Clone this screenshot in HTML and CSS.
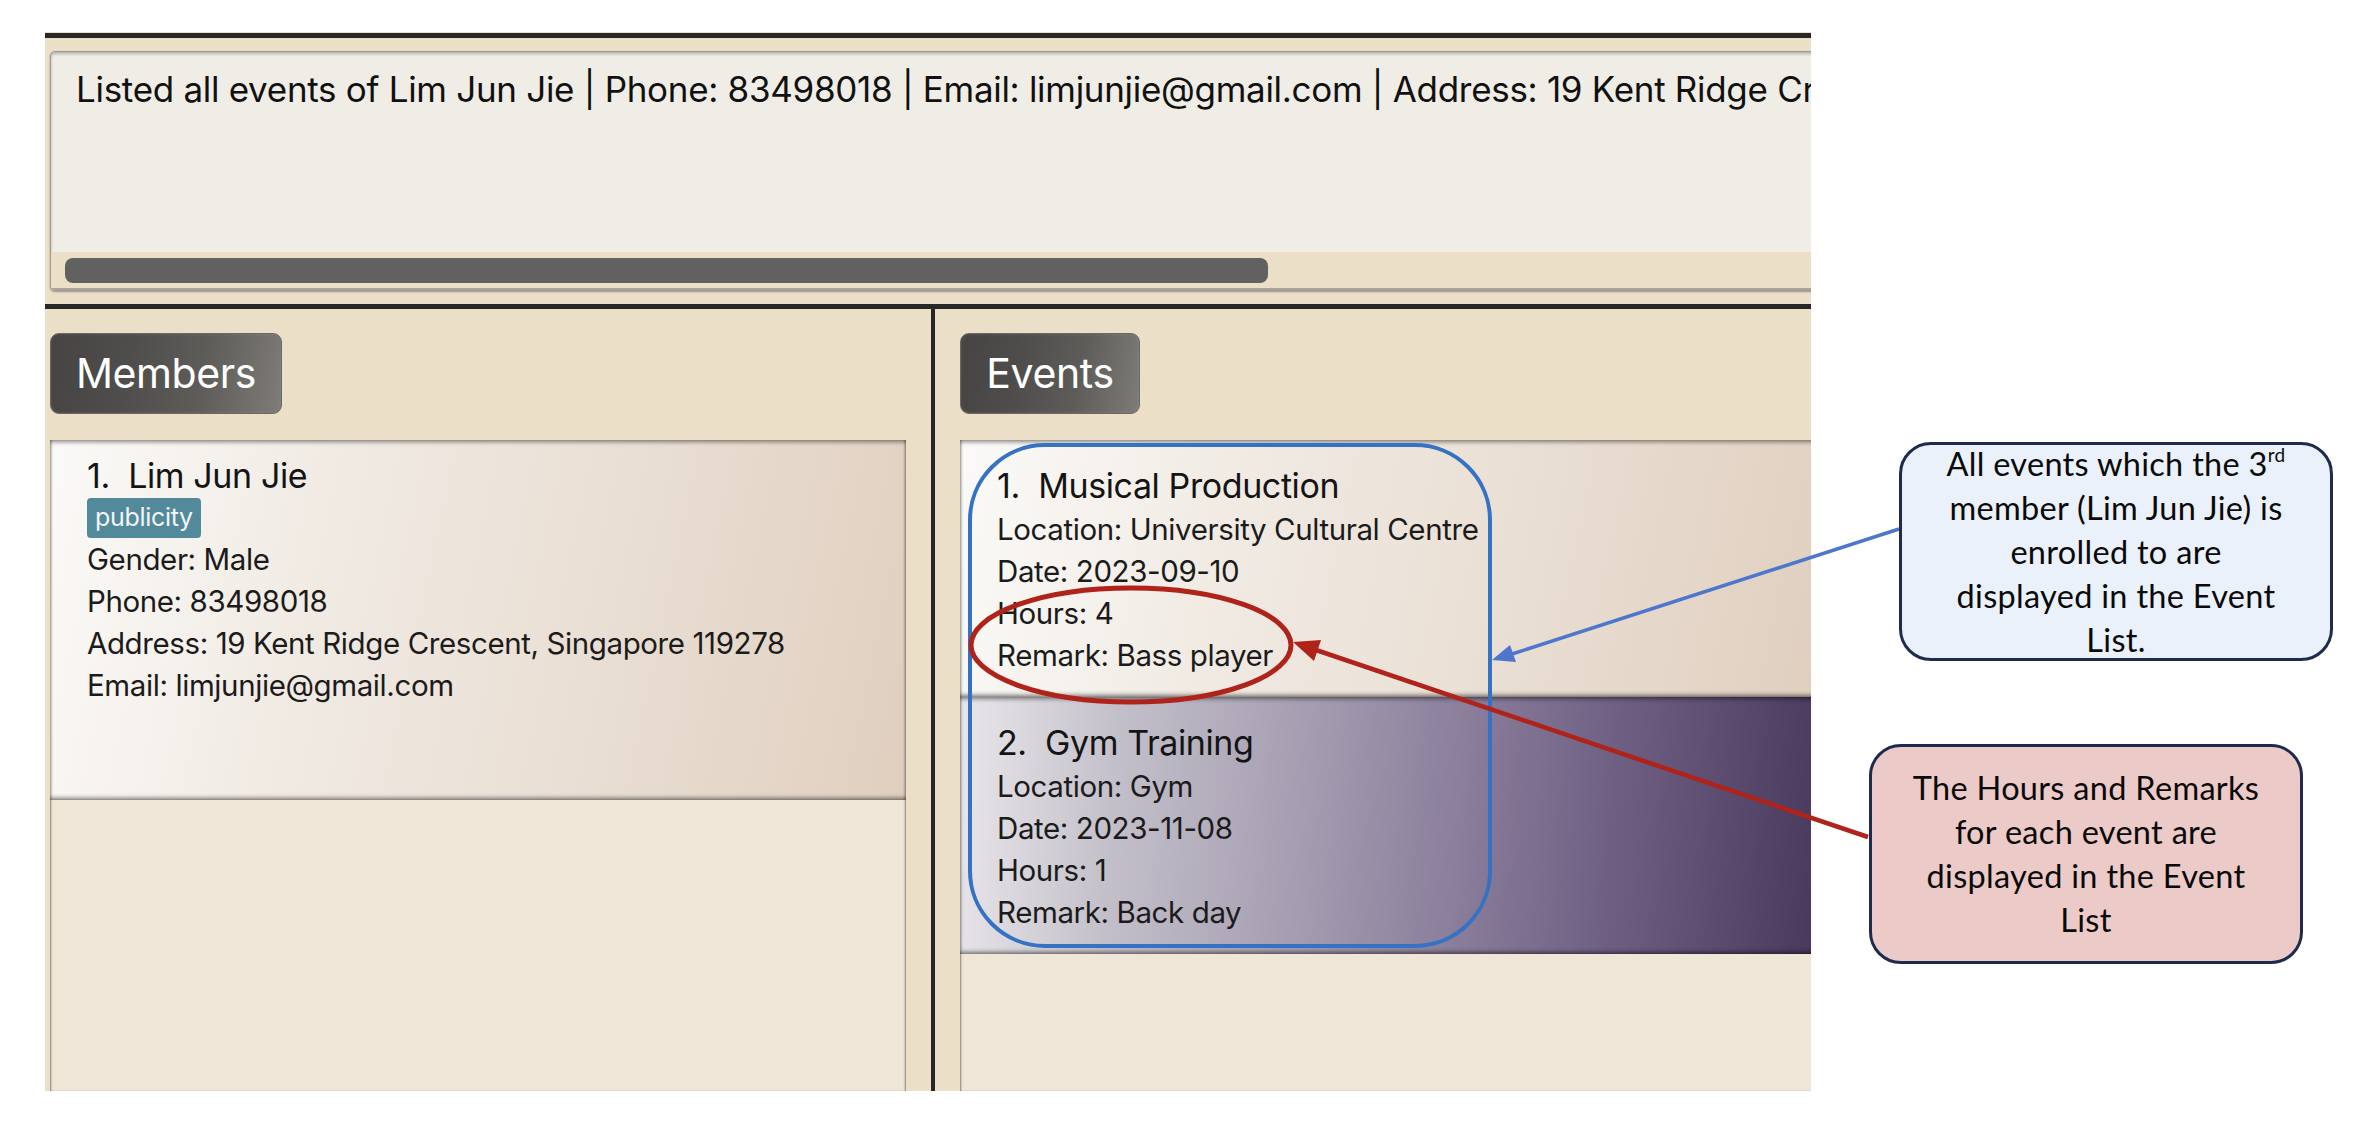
FILE: index.html
```html
<!DOCTYPE html>
<html lang="en">
<head>
<meta charset="utf-8">
<title>Events of member</title>
<link rel="stylesheet" href="styles.css">
</head>
<body>
<div class="page">
  <div class="app">
    <div class="topline"></div>
    <div class="result-wrap">
      <div class="result-box">
        <div class="result-text">Listed all events of Lim Jun Jie | Phone: 83498018 | Email: limjunjie@gmail.com | Address: 19 Kent Ridge Crescent, Singapore 119278</div>
        <div class="hscroll"><div class="thumb"></div></div>
      </div>
    </div>
    <div class="midline"></div>
    <div class="panes">
      <section class="pane pane-members">
        <div class="pane-label">Members</div>
        <div class="list">
          <div class="card member-card">
            <div class="card-name">1.&nbsp; Lim Jun Jie</div>
            <div class="tags"><span class="tag">publicity</span></div>
            <div class="card-line">Gender: Male</div>
            <div class="card-line">Phone: 83498018</div>
            <div class="card-line">Address: 19 Kent Ridge Crescent, Singapore 119278</div>
            <div class="card-line">Email: limjunjie@gmail.com</div>
          </div>
        </div>
      </section>
      <div class="vsep"></div>
      <section class="pane pane-events">
        <div class="pane-label">Events</div>
        <div class="list">
          <div class="card event-card">
            <div class="card-name">1.&nbsp; Musical Production</div>
            <div class="card-line">Location: University Cultural Centre</div>
            <div class="card-line">Date: 2023-09-10</div>
            <div class="card-line">Hours: 4</div>
            <div class="card-line">Remark: Bass player</div>
          </div>
          <div class="card event-card event-card-selected">
            <div class="card-name">2.&nbsp; Gym Training</div>
            <div class="card-line">Location: Gym</div>
            <div class="card-line">Date: 2023-11-08</div>
            <div class="card-line">Hours: 1</div>
            <div class="card-line">Remark: Back day</div>
          </div>
        </div>
      </section>
    </div>
  </div>

  <svg class="annotations" width="2372" height="1142" viewBox="0 0 2372 1142">
    <rect x="970" y="445" width="520" height="501" rx="75" ry="75" fill="none" stroke="#3572c4" stroke-width="4"/>
    <ellipse cx="1131" cy="645" rx="160" ry="57" fill="none" stroke="#b0231a" stroke-width="5"/>
    <line x1="1899" y1="529" x2="1512" y2="654" stroke="#4e76cc" stroke-width="3.5"/>
    <polygon points="1492,660 1510,645 1516,662" fill="#4e76cc"/>
    <line x1="1868" y1="837" x2="1316" y2="650" stroke="#b0231a" stroke-width="4.5"/>
    <polygon points="1293,642 1321,640 1314,661" fill="#b0231a"/>
  </svg>

  <div class="callout callout-blue">
    <p>All events which the 3<sup>rd</sup><br>member (Lim Jun Jie) is<br>enrolled to are<br>displayed in the Event<br>List.</p>
  </div>
  <div class="callout callout-red">
    <p>The Hours and Remarks<br>for each event are<br>displayed in the Event<br>List</p>
  </div>
</div>
</body>
</html>
```

FILE: styles.css
```css
* { box-sizing: border-box; }

html, body {
  margin: 0;
  padding: 0;
  background: #ffffff;
}

.page {
  position: relative;
  width: 2372px;
  height: 1142px;
  padding: 32px 0 0 45px;
  font-family: "Inter", "Noto Sans", sans-serif;
  color: #151515;
}

/* ---------- application window ---------- */
.app {
  width: 1766px;
  height: 1059px;
  background: #ecdfc8;
  overflow: hidden;
  display: flex;
  flex-direction: column;
  padding-top: 1px;
}

.topline,
.midline {
  height: 5px;
  background: #272727;
  flex: none;
}

.result-wrap {
  padding: 13px 0 0 5px;
  flex: none;
}

.result-box {
  width: 1800px;
  height: 240px;
  border: 1px solid #9d9a94;
  border-radius: 5px;
  background: #efede6;
  box-shadow: inset 0 2px 3px rgba(0, 0, 0, 0.25), 0 1px 2px rgba(0, 0, 0, 0.35);
  display: flex;
  flex-direction: column;
  overflow: hidden;
}

.result-text {
  flex: 1;
  padding: 15px 0 0 25px;
  font-size: 35px;
  line-height: 44px;
  white-space: nowrap;
  color: #111;
  letter-spacing: -0.3px;
}

.hscroll {
  height: 38px;
  background: #ecdfc8;
  padding: 6px 0 0 14px;
  flex: none;
  border-bottom: 2px solid #a8a49d;
}

.thumb {
  width: 1203px;
  height: 25px;
  border-radius: 8px;
  background: #616161;
}

.midline { margin-top: 13px; }

.panes {
  flex: 1;
  display: flex;
  min-height: 0;
}

.pane {
  display: flex;
  flex-direction: column;
  min-height: 0;
}

.pane-members {
  flex: none;
  width: 886px;
  padding: 24px 25px 0 5px;
}

.pane-events {
  flex: 1;
  min-width: 0;
  overflow: hidden;
  padding: 24px 0 0 25px;
}

.vsep {
  width: 4px;
  background: #272727;
  flex: none;
}

.pane-label {
  align-self: flex-start;
  height: 81px;
  border-radius: 9px;
  border: 1px solid #6a6864;
  background: linear-gradient(100deg, #454442 0%, #4f4e4c 35%, #5e5c59 65%, #7e7c78 100%);
  box-shadow: inset 0 0 3px rgba(255, 255, 255, 0.12);
  color: #ffffff;
  font-size: 41px;
  line-height: 79px;
  letter-spacing: -0.4px;
  text-align: center;
}

.pane-members .pane-label { width: 232px; }
.pane-events .pane-label { width: 180px; }

.list {
  flex: 1;
  margin-top: 26px;
  background: #f0e6d8;
  box-shadow: inset 2px 0 2px -1px rgba(0, 0, 0, 0.45), inset -2px 0 2px -1px rgba(0, 0, 0, 0.45);
}

.pane-events .list { width: 860px; }

/* ---------- cards ---------- */
.card {
  padding-left: 37px;
  background: linear-gradient(102deg, #fbfaf8 0%, #f1ebe4 30%, #e9ded3 65%, #e0cfbf 100%);
  box-shadow:
    inset 0 4px 4px -2px rgba(0, 0, 0, 0.45),
    inset 0 -4px 4px -2px rgba(0, 0, 0, 0.5),
    inset 3px 0 3px -2px rgba(0, 0, 0, 0.35),
    inset -3px 0 3px -2px rgba(0, 0, 0, 0.35);
}

.member-card {
  height: 360px;
  padding-top: 14px;
}

.event-card {
  height: 257px;
  padding-top: 24px;
}

.event-card-selected {
  background: linear-gradient(94deg, #e9e7eb 0%, #c4c0ca 18%, #a7a0b3 38%, #8a7e9b 58%, #6a5b7f 78%, #47385c 100%);
}

.card-name {
  font-size: 34px;
  line-height: 44px;
  white-space: nowrap;
  color: #141414;
  letter-spacing: -0.4px;
}

.tags { height: 40px; }

.tag {
  display: inline-block;
  height: 40px;
  padding: 0 8px;
  border-radius: 4px;
  background: #528a9b;
  color: #f3f6f7;
  font-size: 25px;
  line-height: 38px;
  letter-spacing: -0.3px;
}

.card-line {
  font-size: 29.5px;
  line-height: 42px;
  white-space: nowrap;
  color: #1b1b1b;
  letter-spacing: -0.4px;
}

/* ---------- annotations ---------- */
.annotations {
  position: absolute;
  left: 0;
  top: 0;
  pointer-events: none;
}

.callout {
  position: absolute;
  border: 3px solid #1e2a4e;
  border-radius: 32px;
  display: flex;
  align-items: center;
  justify-content: center;
  font-family: "Lato", "Open Sans", sans-serif;
  font-size: 32.5px;
  line-height: 44px;
  color: #0a0a0a;
  text-align: center;
  letter-spacing: 0.3px;
}

.callout p { margin: 0; white-space: nowrap; }

.callout sup {
  font-size: 19px;
  line-height: 0;
  vertical-align: 14px;
}

.callout-blue {
  left: 1899px;
  top: 442px;
  width: 434px;
  height: 219px;
  background: #eaf1fa;
}

.callout-red {
  left: 1869px;
  top: 744px;
  width: 434px;
  height: 220px;
  background: #ebcac8;
}
```
